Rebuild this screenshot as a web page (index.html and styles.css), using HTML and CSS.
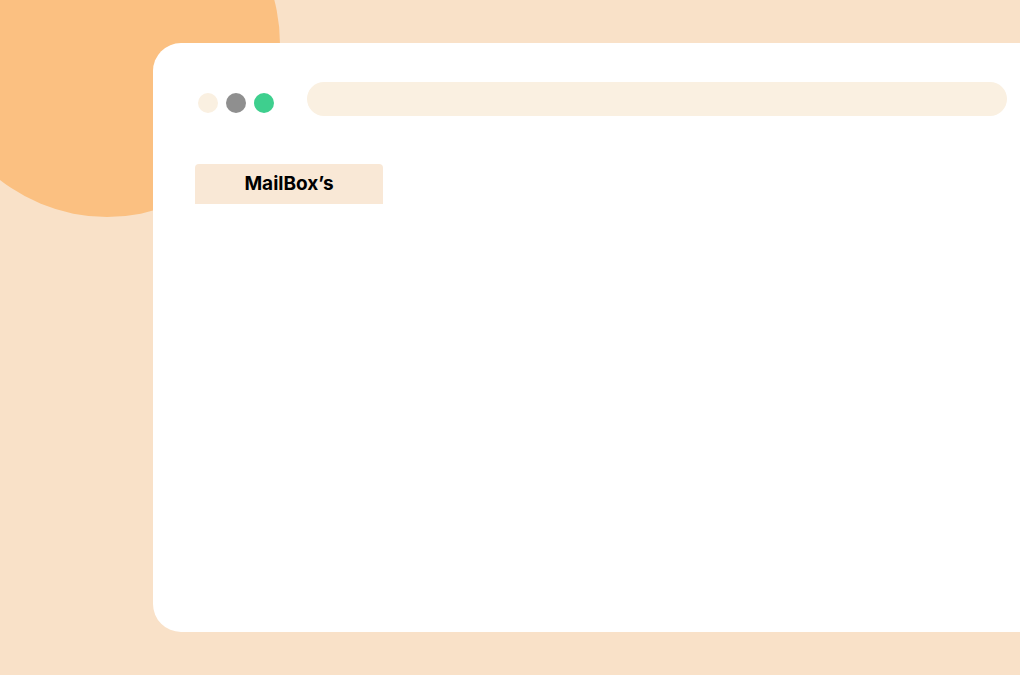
FILE: index.html
```html
<!DOCTYPE html>
<html lang="en">
<head>
<meta charset="utf-8">
<title>MailBox's</title>
<link rel="stylesheet" href="styles.css">
</head>
<body>
<div class="blob"></div>
<main class="window">
  <div class="window-bar">
    <div class="dots">
      <span class="dot dot-light"></span>
      <span class="dot dot-gray"></span>
      <span class="dot dot-green"></span>
    </div>
    <div class="url-bar"></div>
  </div>
  <div class="tabs">
    <div class="tab">MailBox’s</div>
  </div>
</main>
</body>
</html>
```
FILE: styles.css
```css
html, body {
  margin: 0;
  padding: 0;
}
body {
  width: 1020px;
  height: 675px;
  overflow: hidden;
  position: relative;
  background: #f9e1c8;
  font-family: Inter, "Noto Sans", "Liberation Sans", sans-serif;
}
.blob {
  position: absolute;
  left: -66px;
  top: -129px;
  width: 346px;
  height: 346px;
  border-radius: 50%;
  background: #fbc081;
}
.window {
  position: relative;
  margin: 43px 0 0 153px;
  width: 900px;
  height: 589px;
  background: #ffffff;
  border-radius: 28px;
  box-sizing: border-box;
  padding: 39px 46px 0 42px;
}
.window-bar {
  display: flex;
  align-items: flex-start;
  gap: 33px;
}
.dots {
  display: flex;
  gap: 8px;
  margin: 11px 0 0 3px;
}
.dot {
  width: 20px;
  height: 20px;
  border-radius: 50%;
}
.dot-light { background: #faf0e1; }
.dot-gray { background: #8f8f8f; }
.dot-green { background: #3ecf8e; }
.url-bar {
  flex: 1;
  height: 34px;
  border-radius: 17px;
  background: #faf0e1;
}
.tabs {
  display: flex;
  margin-top: 48px;
}
.tab {
  width: 188px;
  height: 40px;
  box-sizing: border-box;
  padding-bottom: 2px;
  display: flex;
  align-items: center;
  justify-content: center;
  background: #f9e8d6;
  border-radius: 4px 4px 0 0;
  font-size: 19px;
  font-weight: 700;
  color: #000000;
}
```
